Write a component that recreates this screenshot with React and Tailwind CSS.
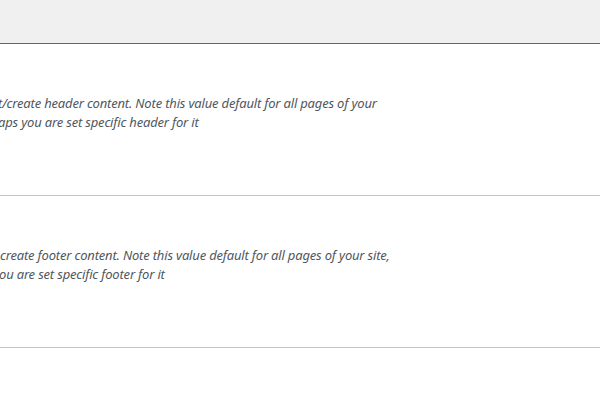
function ClippedLine({ prefix, offset, children }) {
    // prefix is pushed past the left edge, the visible part starts at `offset`
    return (
        <span className="flex whitespace-nowrap">
            <span className={`inline-block shrink-0 text-right overflow-hidden ${offset}`}>{prefix}</span>
            <span>{children}</span>
        </span>
    );
}

export default function App() {
    const descClass = "text-[13px] leading-[19px] italic text-[#50575e] tracking-[-0.18px]";
    const font = { fontFamily: "'Noto Sans', 'Open Sans', sans-serif" };

    return (
        <main className="flex min-h-screen w-full flex-col bg-white overflow-hidden" style={font}>
            <div className="h-[44px] w-full bg-[#f0f0f0] border-b border-[#d63638]" />

            <div className="h-[152px] w-full border-b border-[#c3c4c7] pt-[50px] overflow-hidden">
                <p className={`${descClass} ml-[-160px]`}>
                    <ClippedLine prefix="Selec" offset="w-[158px]">t/create header content. Note this value default for all pages of your</ClippedLine>
                    <ClippedLine prefix="site, perh" offset="w-[158px]">aps you are set specific header for it</ClippedLine>
                </p>
            </div>

            <div className="h-[152px] w-full border-b border-[#c3c4c7] pt-[50px] overflow-hidden">
                <p className={`${descClass} ml-[-160px]`}>
                    <ClippedLine prefix="Edit/" offset="w-[160px]">create footer content. Note this value default for all pages of your site,</ClippedLine>
                    <ClippedLine prefix="perhaps y" offset="w-[159px]">ou are set specific footer for it</ClippedLine>
                </p>
            </div>
        </main>
    );
}
